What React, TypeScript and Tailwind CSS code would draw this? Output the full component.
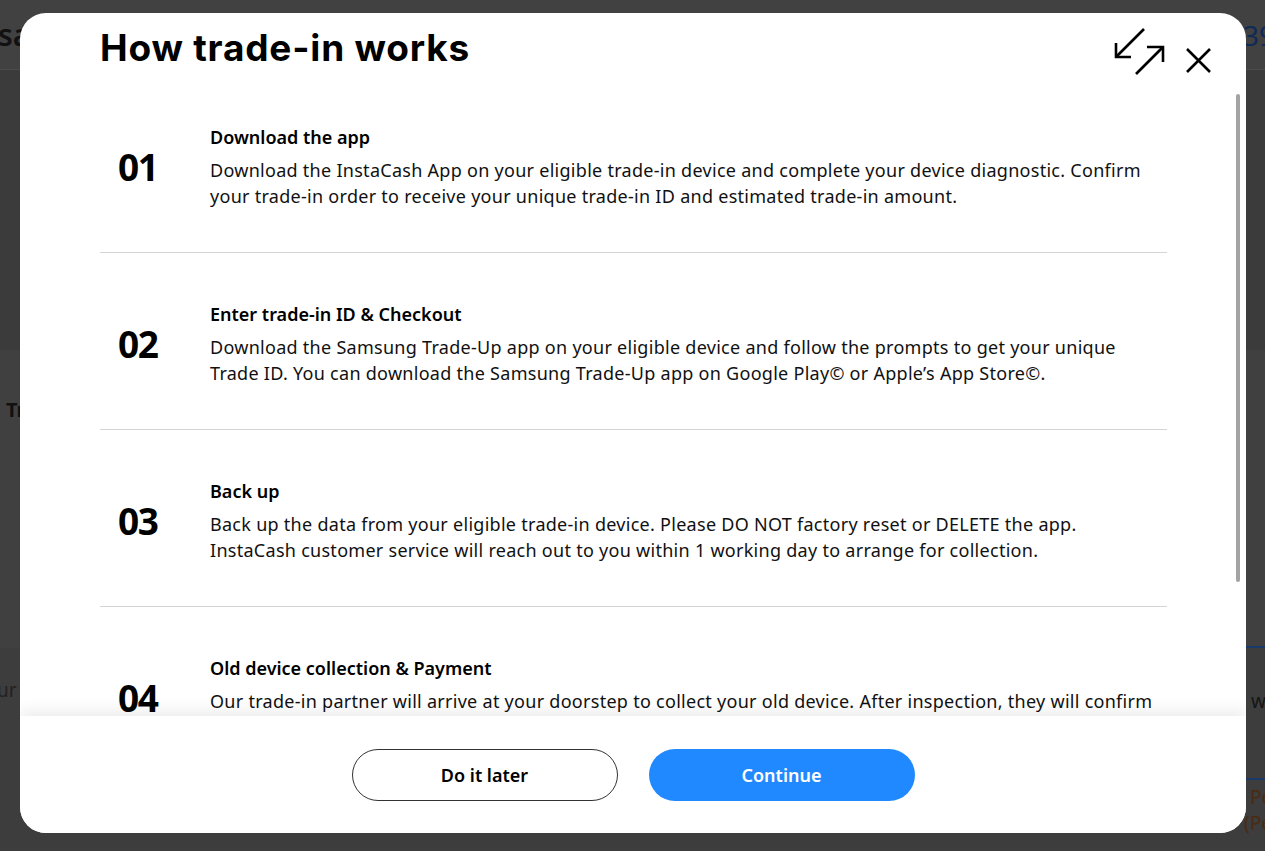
import React from 'react';

type Step = {
  no: string;
  title: string;
  lines: string[];
};

const steps: Step[] = [
  {
    no: '01',
    title: 'Download the app',
    lines: [
      'Download the InstaCash App on your eligible trade-in device and complete your device diagnostic. Confirm',
      'your trade-in order to receive your unique trade-in ID and estimated trade-in amount.',
    ],
  },
  {
    no: '02',
    title: 'Enter trade-in ID & Checkout',
    lines: [
      'Download the Samsung Trade-Up app on your eligible device and follow the prompts to get your unique',
      'Trade ID. You can download the Samsung Trade-Up app on Google Play© or Apple’s App Store©.',
    ],
  },
  {
    no: '03',
    title: 'Back up',
    lines: [
      'Back up the data from your eligible trade-in device. Please DO NOT factory reset or DELETE the app.',
      'InstaCash customer service will reach out to you within 1 working day to arrange for collection.',
    ],
  },
  {
    no: '04',
    title: 'Old device collection & Payment',
    lines: [
      'Our trade-in partner will arrive at your doorstep to collect your old device. After inspection, they will confirm',
      'the final trade-in value and transfer the amount to your account.',
    ],
  },
];

const HeaderIcons = () => (
  <svg width="102" height="50" viewBox="0 0 102 50" fill="none" stroke="#000" strokeWidth="2.6">
    {/* collapse / expand */}
    <path d="M32 3 L4.5 30.5" />
    <path d="M4 17 V31 H19" />
    <path d="M24 48 L50.5 21.5" />
    <path d="M35 21 H51 V36" />
    {/* close */}
    <path d="M75 23 L98 46 M98 23 L75 46" />
  </svg>
);

const StepRow: React.FC<{ step: Step; last?: boolean }> = ({ step, last }) => (
  <div className={`flex items-center pt-[48px] pb-[43px] ${last ? '' : 'border-b border-[#d4d4d4]'}`}>
    <div className="w-[110px] shrink-0 pl-[18px] text-[37px] font-bold leading-none tracking-[-1.5px] text-black">
      {step.no}
    </div>
    <div className="flex-1">
      <div className="mb-[7px] text-[18px] font-semibold leading-[26px] text-black">{step.title}</div>
      <p className="text-[18px] leading-[26px] tracking-[0.28px] text-[#111]">
        {step.lines.map((l, i) => (
          <span key={i} className="block whitespace-nowrap">
            {l}
          </span>
        ))}
      </p>
    </div>
  </div>
);

export default function App() {
  return (
    <div className="relative h-[851px] w-full overflow-hidden bg-[#3d3d3d] font-['Noto_Sans',sans-serif]">
      {/* page behind the overlay */}
      <div className="flex h-full flex-col">
        <div className="flex h-[70px] shrink-0 items-center justify-between border-b border-[#4b4b4b] bg-[#414141]">
          <span className="-ml-[2px] text-[30px] font-semibold text-[#111]">sa</span>
          <span className="-mr-[10px] text-[28px] text-[#0e2a57]">39</span>
        </div>
        <div className="h-[280px] shrink-0 bg-[#3b3b3b]" />
        <div className="flex h-[298px] shrink-0 flex-col bg-[#404040]">
          <span className="mt-[45px] ml-[6px] text-[20px] font-bold text-[#111]">Tr</span>
          <div className="mt-auto ml-auto w-[19px] border-b-2 border-[#173a6b]" />
        </div>
        <div className="flex flex-1 items-start justify-between bg-[#3d3d3d]">
          <span className="-ml-[3px] mt-[29px] text-[19px] leading-[26px] text-[#222]">ur c</span>
          <div className="flex w-[19px] flex-col text-[19px] leading-[26px]">
            <span className="mt-[40px] pl-[5px] text-[#151515]">w</span>
            <div className="mt-[64px] border-b-2 border-[#173a6b]" />
            <span className="mt-[4px] pl-[4px] text-[#4a2a12]">Pe</span>
            <span className="-ml-[2px] text-[#4a2a12]">(Per</span>
          </div>
        </div>
      </div>

      {/* modal */}
      <div className="absolute left-[20px] top-[13px] flex h-[820px] w-[1226px] flex-col overflow-hidden rounded-[26px] bg-white">
        <div className="flex h-[63px] shrink-0 items-start justify-between pl-[80px] pr-[32px]">
          <h2 className="pt-[13px] text-[37px] font-bold leading-[1.2] tracking-[0.8px] text-black font-['Inter',sans-serif]">
            How trade-in works
          </h2>
          <div className="pt-[13px]">
            <HeaderIcons />
          </div>
        </div>

        <div className="relative min-h-0 flex-1 overflow-hidden">
          <div className="pl-[80px] pr-[79px]">
            {steps.map((s, i) => (
              <StepRow key={s.no} step={s} last={i === steps.length - 1} />
            ))}
          </div>
          <div className="absolute right-[6px] top-[18px] h-[488px] w-[4px] rounded-full bg-[#a3a3a3]" />
        </div>

        <div className="relative flex h-[117px] shrink-0 items-start justify-center gap-[31px] bg-white pt-[33px] shadow-[0_-6px_14px_rgba(0,0,0,0.07)]">
          <button className="h-[52px] w-[266px] rounded-full border border-[#333] bg-white text-[18px] font-semibold text-black">
            Do it later
          </button>
          <button className="h-[52px] w-[266px] rounded-full bg-[#2189ff] text-[18px] font-semibold text-white">
            Continue
          </button>
        </div>
      </div>
    </div>
  );
}
